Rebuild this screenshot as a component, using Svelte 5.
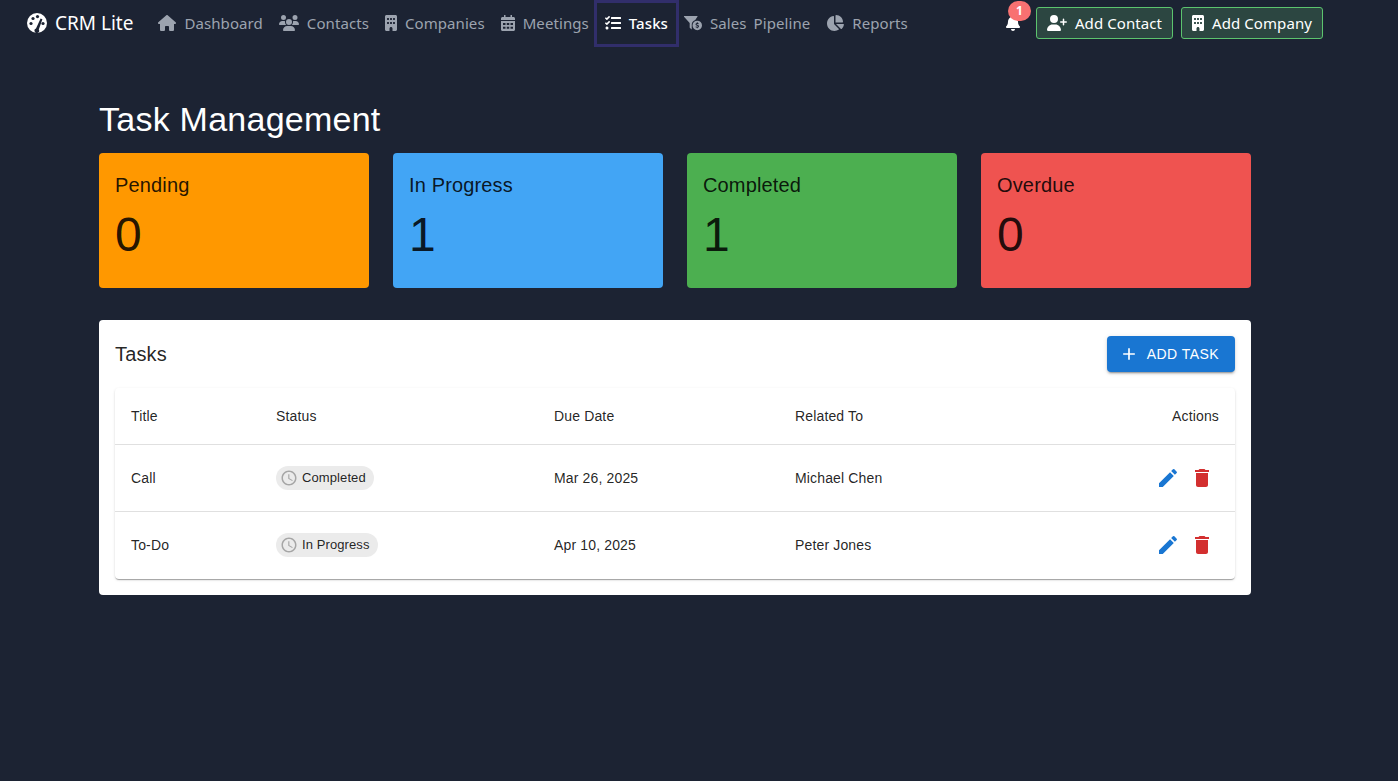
<script>
	const nav_links = [
		{ label: 'Dashboard', icon: 'home', width: 576, height: 512 },
		{ label: 'Contacts', icon: 'users', width: 640, height: 512 },
		{ label: 'Companies', icon: 'building', width: 384, height: 512 },
		{ label: 'Meetings', icon: 'calendar', width: 448, height: 512 },
		{ label: 'Tasks', icon: 'tasks', width: 512, height: 512, active: true },
		{ label: 'Sales Pipeline', icon: 'funnel', width: 608, height: 540 },
		{ label: 'Reports', icon: 'pie', width: 576, height: 512 }
	];

	const paths = {
		home: 'M575.8 255.5c0 18-15 32.1-32 32.1h-32l.7 160.2c0 2.7-.2 5.4-.5 8.1V472c0 22.1-17.9 40-40 40H456c-1.1 0-2.2 0-3.3-.1c-1.4 .1-2.8 .1-4.2 .1H416 392c-22.1 0-40-17.9-40-40V448 384c0-17.7-14.3-32-32-32H256c-17.7 0-32 14.3-32 32v64 24c0 22.1-17.9 40-40 40H160 128.1c-1.5 0-3-.1-4.5-.2c-1.2 .1-2.4 .2-3.6 .2H104c-22.1 0-40-17.9-40-40V360c0-.9 0-1.9 .1-2.8V287.6H32c-18 0-32-14-32-32.1c0-9 3-17 10-24L266.4 8c7-7 15-8 22-8s15 2 21 7L564.8 231.5c8 7 12 15 11 24z',
		users: 'M144 0a80 80 0 1 1 0 160A80 80 0 1 1 144 0zM512 0a80 80 0 1 1 0 160A80 80 0 1 1 512 0zM0 298.7C0 239.8 47.8 192 106.7 192h42.7c15.9 0 31 3.5 44.6 9.7c-1.3 7.2-1.9 14.7-1.9 22.3c0 38.2 16.8 72.5 43.3 96c-.2 0-.4 0-.7 0H21.3C9.6 320 0 310.4 0 298.7zM405.3 320c-.2 0-.4 0-.7 0c26.6-23.5 43.3-57.8 43.3-96c0-7.6-.7-15-1.9-22.3c13.6-6.3 28.7-9.7 44.6-9.7h42.7C592.2 192 640 239.8 640 298.7c0 11.8-9.6 21.3-21.3 21.3H405.3zM224 224a96 96 0 1 1 192 0 96 96 0 1 1 -192 0zM128 485.3C128 411.7 187.7 352 261.3 352H378.7C452.3 352 512 411.7 512 485.3c0 14.7-11.9 26.7-26.7 26.7H154.7c-14.7 0-26.7-11.9-26.7-26.7z',
		building: 'M48 0C21.5 0 0 21.5 0 48V464c0 26.5 21.5 48 48 48h96V432c0-26.5 21.5-48 48-48s48 21.5 48 48v80h96c26.5 0 48-21.5 48-48V48c0-26.5-21.5-48-48-48H48zM64 240c0-8.8 7.2-16 16-16h32c8.8 0 16 7.2 16 16v32c0 8.8-7.2 16-16 16H80c-8.8 0-16-7.2-16-16V240zm112-16h32c8.8 0 16 7.2 16 16v32c0 8.8-7.2 16-16 16H176c-8.8 0-16-7.2-16-16V240c0-8.8 7.2-16 16-16zm80 16c0-8.8 7.2-16 16-16h32c8.8 0 16 7.2 16 16v32c0 8.8-7.2 16-16 16H272c-8.8 0-16-7.2-16-16V240zM80 96h32c8.8 0 16 7.2 16 16v32c0 8.8-7.2 16-16 16H80c-8.8 0-16-7.2-16-16V112c0-8.8 7.2-16 16-16zm80 16c0-8.8 7.2-16 16-16h32c8.8 0 16 7.2 16 16v32c0 8.8-7.2 16-16 16H176c-8.8 0-16-7.2-16-16V112zM272 96h32c8.8 0 16 7.2 16 16v32c0 8.8-7.2 16-16 16H272c-8.8 0-16-7.2-16-16V112c0-8.8 7.2-16 16-16z',
		calendar: 'M96 0h48v64h160V0h48v64h48c26 0 48 22 48 48v48H0v-48c0-26 22-48 48-48h48zM0 192h448v272c0 26-22 48-48 48H48c-26 0-48-22-48-48zM64 256v64h80v-64zm120 0v64h80v-64zm120 0v64h80v-64zM64 376v64h80v-64zm120 0v64h80v-64zm120 0v64h80v-64z',
		tasks: 'M139.61 35.5a12 12 0 0 0-17 0L58.93 98.81l-22.7-22.12a12 12 0 0 0-17 0L3.53 92.41a12 12 0 0 0 0 17l47.59 47.4a12.78 12.78 0 0 0 17.61 0l15.59-15.62L156.52 69a12.09 12.09 0 0 0 .09-17zm0 159.19a12 12 0 0 0-17 0l-63.68 63.72-22.7-22.1a12 12 0 0 0-17 0L3.53 252a12 12 0 0 0 0 17L51 316.5a12.77 12.77 0 0 0 17.6 0l15.7-15.69 72.2-72.22a12 12 0 0 0 .09-16.9zM64 368c-26.49 0-48.59 21.5-48.59 48S37.53 464 64 464a48 48 0 0 0 0-96zm432 16H208a16 16 0 0 0-16 16v32a16 16 0 0 0 16 16h288a16 16 0 0 0 16-16v-32a16 16 0 0 0-16-16zm0-320H208a16 16 0 0 0-16 16v32a16 16 0 0 0 16 16h288a16 16 0 0 0 16-16V80a16 16 0 0 0-16-16zm0 160H208a16 16 0 0 0-16 16v32a16 16 0 0 0 16 16h288a16 16 0 0 0 16-16v-32a16 16 0 0 0-16-16z',
		funnel: 'M4 32C-6 32-10 44-3 52l195 222v150c0 8 4 14 10 18l60 44V320c0-74 50-136 118-155L456 52c7-8 3-20-7-20zM448 192a160 160 0 1 0 0 320 160 160 0 1 0 0-320zm16 56v24c16 3 30 10 38 18l-20 24c-10-8-22-14-36-14-12 0-20 4-20 12 0 9 10 12 28 18 26 8 52 18 52 50 0 24-17 40-42 45v23h-32v-23c-20-3-36-12-46-22l22-24c10 10 24 18 40 18 14 0 22-5 22-14s-10-13-30-20c-24-8-50-18-50-47 0-24 18-40 42-44v-24z',
		pie: 'M304 240V16.6c0-9 7-16.6 16-16.6C443.7 0 544 100.3 544 224c0 9-7.6 16-16.6 16H304zM32 272C32 150.7 122.1 50.3 239 34.3c9.2-1.3 17 6.1 17 15.4V288L412.5 444.5c6.7 6.7 6.2 17.7-1.5 23.1C371.8 495.6 323.8 512 272 512C139.5 512 32 404.6 32 272zm526.4 16c9.3 0 16.6 7.8 15.4 17c-7.7 55.9-34.6 105.6-73.9 142.3c-6 5.6-15.4 5.2-21.2-.7L320 288H558.4z',
		bell: 'M224 512c35.32 0 63.97-28.65 63.97-64H160.03c0 35.35 28.65 64 63.97 64zm215.39-149.71c-19.32-20.76-55.47-51.99-55.47-154.29 0-77.7-54.48-139.9-127.94-155.16V32c0-17.67-14.32-32-31.98-32s-31.98 14.33-31.98 32v20.84C118.56 68.1 64.08 130.3 64.08 208c0 102.3-36.15 133.53-55.47 154.29-6 6.45-8.66 14.16-8.61 21.71.11 16.4 12.98 32 32.1 32h383.8c19.12 0 32-15.6 32.1-32 .05-7.55-2.61-15.27-8.61-21.71z',
		user_plus: 'M96 128a128 128 0 1 1 256 0A128 128 0 1 1 96 128zM0 482.3C0 383.8 79.8 304 178.3 304h91.4C368.2 304 448 383.8 448 482.3c0 16.4-13.3 29.7-29.7 29.7H29.7C13.3 512 0 498.7 0 482.3zM504 312V248H440c-13.3 0-24-10.7-24-24s10.7-24 24-24h64V136c0-13.3 10.7-24 24-24s24 10.7 24 24v64h64c13.3 0 24 10.7 24 24s-10.7 24-24 24H552v64c0 13.3-10.7 24-24 24s-24-10.7-24-24z'
	};

	const stats = [
		{ label: 'Pending', value: 0, color: '#ff9800' },
		{ label: 'In Progress', value: 1, color: '#42a5f5' },
		{ label: 'Completed', value: 1, color: '#4caf50' },
		{ label: 'Overdue', value: 0, color: '#ef5350' }
	];

	const tasks = [
		{ title: 'Call', status: 'Completed', due: 'Mar 26, 2025', related: 'Michael Chen' },
		{ title: 'To-Do', status: 'In Progress', due: 'Apr 10, 2025', related: 'Peter Jones' }
	];
</script>

<header class="topbar">
	<div class="brand">
		<svg class="brand-icon" viewBox="0 0 20 20" aria-hidden="true">
			<circle cx="10" cy="10" r="10" fill="#fff" />
			<circle cx="4" cy="10.5" r="1.6" fill="#1c2333" />
			<circle cx="6" cy="5.5" r="1.6" fill="#1c2333" />
			<circle cx="10.5" cy="3.6" r="1.6" fill="#1c2333" />
			<circle cx="16" cy="10.5" r="1.6" fill="#1c2333" />
			<path d="M9 15.5l4.6-10 1.8.8-3.6 10.2a2.3 2.3 0 1 1-2.8-1z" fill="#1c2333" />
		</svg>
		<span>CRM Lite</span>
	</div>
	<nav class="links">
		{#each nav_links as link}
			<a class="link" class:active={link.active} href="#top">
				<svg class="link-icon" viewBox="0 0 {link.width} {link.height}" aria-hidden="true">
					<path d={paths[link.icon]} />
				</svg>
				{link.label}
			</a>
		{/each}
	</nav>
	<div class="actions">
		<div class="bell">
			<svg viewBox="0 0 448 512" aria-hidden="true"><path d={paths.bell} /></svg>
			<span class="badge">1</span>
		</div>
		<button class="quick">
			<svg viewBox="0 0 640 512" aria-hidden="true"><path d={paths.user_plus} /></svg>
			Add Contact
		</button>
		<button class="quick">
			<svg viewBox="0 0 384 512" aria-hidden="true"><path d={paths.building} /></svg>
			Add Company
		</button>
	</div>
</header>

<main class="page">
	<h1>Task Management</h1>

	<section class="stats">
		{#each stats as stat}
			<div class="stat" style="background: {stat.color}">
				<div class="stat-label">{stat.label}</div>
				<div class="stat-value">{stat.value}</div>
			</div>
		{/each}
	</section>

	<section class="panel">
		<div class="panel-head">
			<h2>Tasks</h2>
			<button class="add-task">
				<svg viewBox="0 0 24 24" aria-hidden="true"><path d="M19 13h-6v6h-2v-6H5v-2h6V5h2v6h6v2z" /></svg>
				ADD TASK
			</button>
		</div>
		<div class="table-wrap">
			<table>
				<colgroup>
					<col style="width: 145px" />
					<col style="width: 278px" />
					<col style="width: 241px" />
					<col />
				</colgroup>
				<thead>
					<tr>
						<th>Title</th>
						<th>Status</th>
						<th>Due Date</th>
						<th>Related To</th>
						<th class="right">Actions</th>
					</tr>
				</thead>
				<tbody>
					{#each tasks as task}
						<tr>
							<td>{task.title}</td>
							<td>
								<span class="chip">
									<svg viewBox="0 0 24 24" aria-hidden="true">
										<path d="M11.99 2C6.47 2 2 6.48 2 12s4.47 10 9.99 10C17.52 22 22 17.52 22 12S17.52 2 11.99 2zM12 20c-4.42 0-8-3.58-8-8s3.58-8 8-8 8 3.58 8 8-3.58 8-8 8zm.5-13H11v6l5.25 3.15.75-1.23-4.5-2.67z" />
									</svg>
									<span class="chip-text">{task.status}</span>
								</span>
							</td>
							<td>{task.due}</td>
							<td>{task.related}</td>
							<td class="right">
								<div class="row-actions">
									<svg class="edit" viewBox="0 0 24 24" aria-hidden="true">
										<path d="M3 17.25V21h3.75L17.81 9.94l-3.75-3.75L3 17.25zM20.71 7.04c.39-.39.39-1.02 0-1.41l-2.34-2.34a.9959.9959 0 0 0-1.41 0l-1.83 1.83 3.75 3.75 1.83-1.83z" />
									</svg>
									<svg class="delete" viewBox="0 0 24 24" aria-hidden="true">
										<path d="M6 19c0 1.1.9 2 2 2h8c1.1 0 2-.9 2-2V7H6v12zM19 4h-3.5l-1-1h-5l-1 1H5v2h14V4z" />
									</svg>
								</div>
							</td>
						</tr>
					{/each}
				</tbody>
			</table>
		</div>
	</section>
</main>

<style>
	:global(body) {
		background: #1c2333;
		font-family: 'Liberation Sans', Arial, sans-serif;
		min-height: 781px;
	}
	.topbar {
		display: flex;
		align-items: center;
		height: 46px;
		padding: 0 75px 0 27px;
		font-family: 'Noto Sans', sans-serif;
	}
	.brand {
		display: flex;
		align-items: center;
		gap: 8px;
		margin-right: 17px;
		color: #fff;
		font-size: 19px;
	}
	.brand-icon {
		width: 20px;
		height: 20px;
	}
	.links {
		display: flex;
		align-items: center;
	}
	.link {
		display: flex;
		align-items: center;
		gap: 8px;
		height: 41px;
		padding: 0 8px;
		color: #9ca3af;
		font-size: 15px;
		letter-spacing: 0.08px;
		word-spacing: 3px;
		text-decoration: none;
	}
	.link.active {
		color: #fff;
		font-weight: 500;
		outline: 3px solid #312e6b;
	}
	.link-icon {
		height: 16px;
		width: auto;
		fill: currentColor;
	}
	.actions {
		display: flex;
		align-items: center;
		gap: 8px;
		margin-left: auto;
	}
	.bell {
		position: relative;
		width: 14px;
		height: 16px;
		margin-right: 8px;
	}
	.bell svg {
		display: block;
		width: 14px;
		height: 16px;
		fill: #fff;
	}
	.badge {
		position: absolute;
		top: -14px;
		left: 2px;
		width: 23px;
		height: 20px;
		border-radius: 10px;
		background: #f87171;
		color: #fff;
		font-size: 12px;
		font-weight: 700;
		line-height: 20px;
		text-align: center;
	}
	.quick {
		display: flex;
		align-items: center;
		gap: 8px;
		height: 32px;
		padding: 0 10px;
		border: 1px solid #5cc46e;
		border-radius: 3px;
		background: #2c4641;
		color: #fff;
		font-family: inherit;
		font-size: 15px;
		letter-spacing: 0.08px;
	}
	.quick svg {
		fill: #fff;
		height: 16px;
		width: auto;
	}
	.page {
		width: 1152px;
		margin-left: 99px;
	}
	h1 {
		margin: 0;
		padding-top: 53px;
		color: #fff;
		font-size: 34px;
		font-weight: 400;
		letter-spacing: 0.25px;
		line-height: 40px;
	}
	.stats {
		display: grid;
		grid-template-columns: repeat(4, 270px);
		gap: 24px;
		margin-top: 14px;
	}
	.stat {
		height: 135px;
		box-sizing: border-box;
		padding: 20px 16px 0;
		border-radius: 4px;
		color: rgba(0, 0, 0, 0.87);
	}
	.stat-label {
		font-size: 20px;
		letter-spacing: 0.15px;
		line-height: 24px;
	}
	.stat-value {
		margin-top: 10px;
		font-size: 48px;
		line-height: 56px;
	}
	.panel {
		margin-top: 32px;
		padding: 16px;
		border-radius: 4px;
		background: #fff;
		color: rgba(0, 0, 0, 0.87);
	}
	.panel-head {
		display: flex;
		align-items: center;
		justify-content: space-between;
		height: 36px;
		margin-bottom: 16px;
	}
	h2 {
		margin: 0;
		font-size: 20px;
		font-weight: 400;
		letter-spacing: 0.15px;
	}
	.add-task {
		display: flex;
		align-items: center;
		gap: 8px;
		height: 36px;
		padding: 0 16px 0 12px;
		border: 0;
		border-radius: 4px;
		background: #1976d2;
		box-shadow: 0 3px 1px -2px rgba(0, 0, 0, 0.2), 0 2px 2px rgba(0, 0, 0, 0.14), 0 1px 5px rgba(0, 0, 0, 0.12);
		color: #fff;
		font-family: inherit;
		font-size: 14px;
		letter-spacing: 0.45px;
	}
	.add-task svg {
		width: 20px;
		height: 20px;
		fill: #fff;
	}
	.table-wrap {
		border-radius: 4px;
		box-shadow: 0 2px 1px -1px rgba(0, 0, 0, 0.2), 0 1px 1px rgba(0, 0, 0, 0.14), 0 1px 3px rgba(0, 0, 0, 0.12);
	}
	table {
		width: 100%;
		border-collapse: collapse;
		table-layout: fixed;
		font-size: 14px;
		letter-spacing: 0.15px;
	}
	th {
		height: 56px;
		padding: 0 16px;
		border-bottom: 1px solid #e0e0e0;
		font-weight: 400;
		text-align: left;
	}
	td {
		height: 66px;
		padding: 0 16px;
		border-bottom: 1px solid #e0e0e0;
	}
	tbody tr:last-child td {
		border-bottom-color: transparent;
	}
	th.right,
	td.right {
		text-align: right;
	}
	.chip {
		display: inline-flex;
		align-items: center;
		gap: 4px;
		height: 24px;
		padding: 0 8px 0 4px;
		border-radius: 12px;
		background: #ebebeb;
		font-size: 13px;
		letter-spacing: 0.1px;
		vertical-align: middle;
	}
	.chip svg {
		width: 18px;
		height: 18px;
		fill: #a6a6a6;
	}
	.chip-text {
		margin-top: -1px;
	}
	.row-actions {
		display: flex;
		justify-content: flex-end;
		gap: 10px;
		padding-right: 5px;
	}
	.row-actions svg {
		width: 24px;
		height: 24px;
	}
	.edit {
		fill: #1976d2;
	}
	.delete {
		fill: #d32f2f;
	}
</style>
